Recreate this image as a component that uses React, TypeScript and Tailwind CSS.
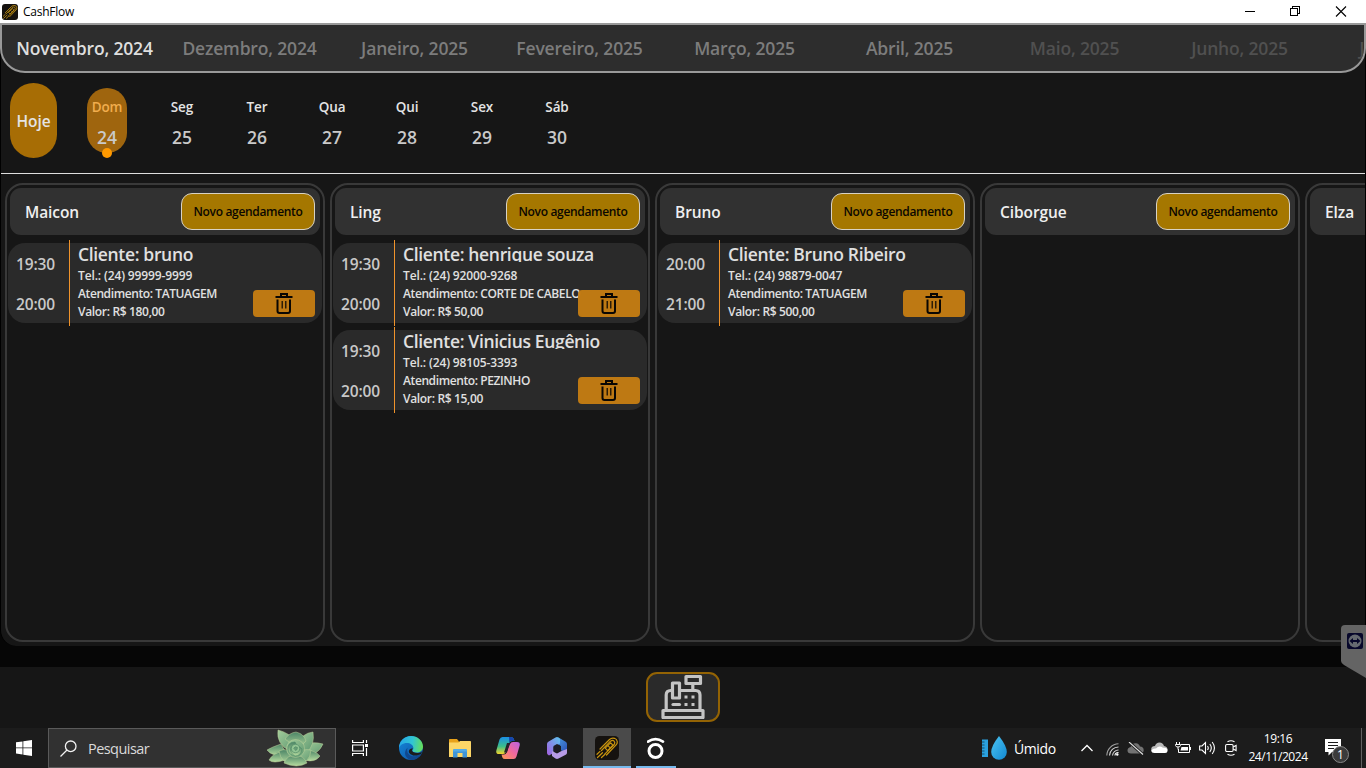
import React from "react";

const months = [
  { name: "Novembro, 2024", cls: "text-[#dedede]" },
  { name: "Dezembro, 2024", cls: "text-[#7c7c7c]" },
  { name: "Janeiro, 2025", cls: "text-[#7c7c7c]" },
  { name: "Fevereiro, 2025", cls: "text-[#7c7c7c]" },
  { name: "Março, 2025", cls: "text-[#7c7c7c]" },
  { name: "Abril, 2025", cls: "text-[#7c7c7c]" },
  { name: "Maio, 2025", cls: "text-[#505050]" },
  { name: "Junho, 2025", cls: "text-[#505050]" },
  { name: "Julho, 2025", cls: "text-[#505050]" },
];

const days = [
  { label: "Seg", n: 25 },
  { label: "Ter", n: 26 },
  { label: "Qua", n: 27 },
  { label: "Qui", n: 28 },
  { label: "Sex", n: 29 },
  { label: "Sáb", n: 30 },
];

type Appointment = {
  start: string;
  end: string;
  client: string;
  phone: string;
  service: string;
  price: string;
};

const columns: { name: string; items: Appointment[] }[] = [
  {
    name: "Maicon",
    items: [
      { start: "19:30", end: "20:00", client: "bruno", phone: "(24) 99999-9999", service: "TATUAGEM", price: "180,00" },
    ],
  },
  {
    name: "Ling",
    items: [
      { start: "19:30", end: "20:00", client: "henrique souza", phone: "(24) 92000-9268", service: "CORTE DE CABELO", price: "50,00" },
      { start: "19:30", end: "20:00", client: "Vinicius Eugênio", phone: "(24) 98105-3393", service: "PEZINHO", price: "15,00" },
    ],
  },
  {
    name: "Bruno",
    items: [
      { start: "20:00", end: "21:00", client: "Bruno Ribeiro", phone: "(24) 98879-0047", service: "TATUAGEM", price: "500,00" },
    ],
  },
  { name: "Ciborgue", items: [] },
  { name: "Elza", items: [] },
];

function AppLogo({ className }: { className: string }) {
  return (
    <svg viewBox="0 0 24 24" className={className} fill="none">
      <rect width="24" height="24" rx="4.5" fill="#15120f" />
      <g stroke="#c8940f" strokeWidth="1.2" strokeLinejoin="round" strokeLinecap="round">
        <path d="M5 13 14.500 3.500q2.200-2 5-1.200 2.500.8 2.800 3.400.1 1.800-1.200 3.200L11.500 19" />
        <path d="m6.500 14.500 9-9.300q2-1.500 3.600-.1 1.400 1.500.1 3.400L10 17.800" />
        <path d="m10.200 12.200 5.300-5.400 2.400 2.300-5.300 5.500zM13.500 10.200l.9.900" />
        <path d="M2 18.300 5 15.400M2.500 21.500l5-4.800M6.500 21.500l3.500-3.300" />
      </g>
    </svg>
  );
}

function Trash() {
  return (
    <svg viewBox="0 0 18 22" className="-mt-px h-[22px] w-[18px]" fill="none" stroke="#0a0703">
      <path d="M.5 5h17" strokeWidth="2" />
      <path d="M6 4.500V2h6v2.500" strokeWidth="2" />
      <path d="M2.500 7.500V19q0 2 2 2h8.500q2 0 2-2V7.500" strokeWidth="2" />
      <path d="M7.200 9v7.500M10.800 9v7.500" strokeWidth="1.200" />
    </svg>
  );
}

function Card({ a }: { a: Appointment }) {
  return (
    <div className="flex h-[80px] w-[314px] shrink-0 rounded-[17px] bg-[#2a2a2a] text-[#e0e0e0]">
      <div className="flex w-[61px] shrink-0 flex-col items-center pr-[6px] pt-[1px] text-[15.5px] font-semibold leading-[40px] tracking-[-0.1px] text-[#c8c8c8]">
        <span>{a.start}</span>
        <span>{a.end}</span>
      </div>
      <div className="-my-[3px] w-px shrink-0 bg-[#f0932b]" />
      <div className="flex min-w-0 flex-1 flex-col whitespace-nowrap pl-[8px] text-[12px] font-semibold">
        <div className="h-[19px] overflow-hidden text-[17.5px] leading-[23px] tracking-[-0.34px]">Cliente: {a.client}</div>
        <span className="mt-[5px] leading-[18px] tracking-[-0.12px]">Tel.: {a.phone}</span>
        <span className="leading-[17px] tracking-[-0.4px]">Atendimento: {a.service}</span>
        <span className="mt-px leading-[18px] tracking-[-0.33px]">Valor: R$ {a.price}</span>
      </div>
      <button className="-ml-[69px] mr-[7px] mt-[47px] flex h-[27px] w-[62px] shrink-0 items-center justify-center rounded-[4px] bg-[#c67d12]/95">
        <Trash />
      </button>
    </div>
  );
}

function CashRegister() {
  return (
    <svg viewBox="0 0 44 46" className="-mt-[2px] h-[46px] w-[44px] shrink-0" fill="none" stroke="#c4c4c4" strokeWidth="3.2" strokeLinejoin="round">
      <rect x="2" y="37.500" width="40" height="7" />
      <path d="M5.200 37V22q0-4.500 4.500-4.500H11M20 17.500h14.500q4.500 0 4.500 4.500V37" />
      <rect x="11.500" y="10" width="7" height="15" />
      <rect x="25" y="3.500" width="14.500" height="7" />
      <path d="M31.800 11v6" />
      <path d="M12 31.500h6.500" strokeLinecap="round" />
      <path d="M25 22.500v3M32 22.500v3M25 30v3M32 30v3" strokeWidth="3" />
    </svg>
  );
}

function Succulent() {
  return (
    <svg viewBox="0 0 58 38" className="h-[38px] w-[58px]">
      <defs>
        <linearGradient id="leaf" x1="0" y1="0" x2="0" y2="1">
          <stop offset="0" stopColor="#4b8466" />
          <stop offset="1" stopColor="#b6dc9f" />
        </linearGradient>
        <linearGradient id="leafB" x1="0" y1="0" x2="1" y2="1">
          <stop offset="0" stopColor="#a3cd9b" />
          <stop offset="1" stopColor="#5c966f" />
        </linearGradient>
      </defs>
      <g stroke="#bfd39a" strokeWidth=".5">
        <path d="M22 27Q6 28 1 21q5-3 14-6z" fill="url(#leaf)" />
        <path d="M36 28q16-1 21-13-11-3-18 1z" fill="url(#leafB)" />
        <path d="M19 31Q7 35 3 31q4-7 15-9z" fill="url(#leaf)" />
        <path d="M39 31q10 3 15-4-5-6-15-6z" fill="url(#leaf)" />
        <path d="M24 22Q10 15 12 1q12 3 18 12z" fill="url(#leafB)" />
        <path d="M31 16Q36 4 47 3q2 13-6 20z" fill="url(#leafB)" />
        <path d="M19 10q4-6 11-7 8 2 10 9l-8 8z" fill="url(#leaf)" />
        <path d="M28 35q-13 0-15-13 9-4 17 4z" fill="url(#leaf)" />
        <path d="M30 35q14 0 15-14-9-2-16 5z" fill="url(#leafB)" />
        <path d="M18 34q3-8 12-8 8 1 11 8-10 6-23 0z" fill="url(#leaf)" />
        <circle cx="29.500" cy="19.500" r="9" fill="url(#leafB)" />
      </g>
      <g stroke="#4f8a66" strokeWidth=".6">
        <path d="M22 21q-1-8 7-8 5 7 0 13-5 1-7-5z" fill="url(#leaf)" />
        <path d="M29 27q-6-3-4-9 7-3 11 2-1 7-7 7z" fill="url(#leaf)" />
        <circle cx="29.500" cy="19.500" r="4.200" fill="#93c593" />
        <path d="M27.500 19.500q1.500-3 4-1 0 3-2.500 3" fill="#679d75" />
      </g>
    </svg>
  );
}

function Edge() {
  return (
    <svg viewBox="0 0 24 24" className="h-6 w-6">
      <defs>
        <linearGradient id="edgeTop" x1="0" y1=".4" x2="1" y2=".5">
          <stop offset="0" stopColor="#26a7e8" />
          <stop offset=".55" stopColor="#31c5d3" />
          <stop offset="1" stopColor="#66df58" />
        </linearGradient>
        <linearGradient id="edgeLow" x1="0" y1="0" x2="1" y2="1">
          <stop offset="0" stopColor="#1689dc" />
          <stop offset="1" stopColor="#0c4fa0" />
        </linearGradient>
      </defs>
      <circle cx="12" cy="12" r="12" fill="url(#edgeLow)" />
      <path d="M0 12C0 5 5.400 0 12 0s12 5 12 10.500c0 4-3 6-6.500 6-3 0-4-1-4-2 0-.7.900-1 .9-2.500C14.400 9 11 7 8 7c-4.500 0-7 2.500-8 5z" fill="url(#edgeTop)" />
      <path d="M8.500 12c-2 8 7 11 14 5.500C20.500 21.500 16.500 24 12 24 5 22 4 14.500 10 10.500c-.8.500-1.200 1-1.500 1.500z" fill="#10488f" />
      <path d="M13.800 12.200c-.5 1.300-1.600 2.300.4 3.800 3 2 7 1 8.800-.5l-.8 2.200c-4 2.600-10 2.500-12-1-1-2 .5-4.200 3.600-4.500z" fill="#1c1c1c" />
    </svg>
  );
}

function Explorer() {
  return (
    <svg viewBox="0 0 22 19" className="h-[19px] w-[22px]">
      <path d="M0 .8Q0 0 .8 0H8l2 2.500V6H0z" fill="#e8a21a" />
      <path d="M0 3.500h9.500L11 2h10.200q.8 0 .8.800V18H0z" fill="#fcd667" />
      <path d="M4 18.500v-7q0-1.500 1.500-1.500h11q1.500 0 1.500 1.500v7h-4.500V14h-5v4.500z" fill="#3f95d8" />
      <path d="M4 11.500q0-1.500 1.500-1.500h11q1.500 0 1.500 1.500v1H4z" fill="#52abe8" />
    </svg>
  );
}

function Copilot() {
  return (
    <svg viewBox="0 0 24 22" className="h-[22px] w-6">
      <defs>
        <linearGradient id="cpA" x1="0" y1="0" x2="0" y2="1">
          <stop offset="0" stopColor="#1a8fe6" />
          <stop offset=".55" stopColor="#3bbd8b" />
          <stop offset="1" stopColor="#f3d52b" />
        </linearGradient>
        <linearGradient id="cpB" x1="1" y1="0" x2="0" y2="1">
          <stop offset="0" stopColor="#b862e6" />
          <stop offset=".5" stopColor="#f2699b" />
          <stop offset="1" stopColor="#fb9a50" />
        </linearGradient>
      </defs>
      <path d="M6.500 0H15q2 0 2.600 1.500L18.500 4H16q-2 0-2.700 2L10 15q-.8 2-3 2H3q-3.500 0-2.600-3.700L3.500 2.500Q4.300 0 6.500 0z" fill="url(#cpA)" />
      <path d="M17.500 22H9q-2 0-2.600-1.500L5.500 17.500H8q2 0 2.700-2L14 7q.8-2 3-2h4q3.500 0 2.600 3.700l-3.100 10.800Q19.700 22 17.500 22z" fill="url(#cpB)" />
      <path d="M11 6h2.500L11 15.500H8z" fill="#242229" />
      <path d="M13 0h2q2 0 2.600 1.500L18.500 4H16q-2 0-2.700 2z" fill="#1745ad" />
    </svg>
  );
}

function M365() {
  return (
    <svg viewBox="0 0 20 22" className="h-[22px] w-5">
      <defs>
        <linearGradient id="msA" x1="1" y1="0" x2="0" y2="1">
          <stop offset="0" stopColor="#5cc4ee" />
          <stop offset="1" stopColor="#a65de0" />
        </linearGradient>
        <linearGradient id="msB" x1="0" y1="0" x2="1" y2="1">
          <stop offset="0" stopColor="#4fa6e6" />
          <stop offset="1" stopColor="#2b4fb4" />
        </linearGradient>
      </defs>
      <path d="M11.500.5 18.700 4.700Q20 5.500 20 7v8l-6-1.500V9.200L8 5.500z" fill="url(#msB)" />
      <path d="M8.500.5q1.500-.8 3 0L13 2v4.500L6.500 10v6L2 18.500l-1-.7q-1-.6-1-2V7q0-1.500 1.300-2.200z" fill="url(#msA)" />
      <path d="M20 12v3.800q0 1.300-1.300 2L11.500 21.600q-1.500.8-3 0L5 19V14l5 2.500 4-2.200z" fill="#b79be6" />
      <path d="M6.500 9 10 7l4 2.200v4.600L10 16l-3.500-2z" fill="#1d1d24" />
    </svg>
  );
}

function Taskbar() {
  return (
    <div className="flex h-[40px] w-full shrink-0 items-center overflow-hidden bg-[#1c1c1c]">
      <div className="flex w-[48px] justify-center">
        <svg viewBox="0 0 16 16" className="h-4 w-4" fill="#fff">
          <path d="M0 2.300 6.500 1.400v6.100H0zM7.300 1.300 16 0v7.500H7.300zM0 8.300h6.500v6.200L0 13.600zM7.300 8.300H16V16l-8.700-1.300z" />
        </svg>
      </div>
      <div className="flex h-[40px] w-[288px] items-center border border-[#5a5a5a] bg-[#313131] pl-[11px] pr-[11px]">
        <svg viewBox="0 0 17 17" className="h-[17px] w-[17px]" fill="none" stroke="#f2f2f2" strokeWidth="1.300">
          <circle cx="10.700" cy="6.300" r="5.300" />
          <path d="M7 10 .5 16.500" />
        </svg>
        <span className="ml-[11px] flex-1 pt-px text-[14.5px] tracking-[-0.55px] text-[#dadada]">Pesquisar</span>
        <Succulent />
      </div>
      <div className="flex w-[48px] justify-center">
        <svg viewBox="0 0 16 16" className="h-4 w-4" fill="none" stroke="#fff" strokeWidth="1.200">
          <path d="M.6 0v2.500h10.800V0M.6 16v-2.500h10.800V16M.6 5h10.800v6H.6zM14.500 0v3M14.500 8v8" />
          <path d="M13 4h3v3h-3z" fill="#fff" stroke="none" />
        </svg>
      </div>
      <div className="flex w-[199px] items-center pl-[15px]">
        <Edge />
        <div className="ml-[26px]"><Explorer /></div>
        <div className="ml-[25px]"><Copilot /></div>
        <div className="ml-[27px]"><M365 /></div>
      </div>
      <div className="flex h-[40px] w-[48px] items-center justify-center border-b-2 border-[#76b9ed] bg-[#4a4a4a] pt-[1px]">
        <AppLogo className="h-6 w-6" />
      </div>
      <div className="ml-[5px] flex h-[40px] w-[40px] items-center justify-center border-b-2 border-[#76b9ed] pt-[1px]">
        <svg viewBox="0 0 18 22" className="h-[22px] w-[18px]" fill="none" stroke="#fff">
          <circle cx="8.500" cy="14" r="6.500" strokeWidth="3" />
          <path d="M1 4.600q7.500-5 15 0" strokeWidth="2.600" strokeLinecap="round" />
        </svg>
      </div>
      <div className="ml-auto flex h-full items-center text-white">
        <svg viewBox="0 0 25 24" className="h-6 w-[25px]">
          <defs>
            <linearGradient id="drop" x1="0" y1="0" x2="1" y2="1">
              <stop offset="0" stopColor="#4cc5f2" />
              <stop offset="1" stopColor="#1288d2" />
            </linearGradient>
          </defs>
          <path d="M0 3.500h6V21H0z" fill="#2aa1df" />
          <path d="M0 6h2.500M0 9h2.500M0 12h2.500M0 15h2.500M0 18h2.500" stroke="#17506e" />
          <path d="M17 0q7.800 10 7.800 16A7.800 7.800 0 0 1 9.200 16Q9.200 10 17 0z" fill="url(#drop)" />
        </svg>
        <span className="ml-[7px] w-[42px] text-[14px] tracking-[-0.4px]">Úmido</span>
        <svg viewBox="0 0 12 8" className="ml-[25px] h-2 w-3" fill="none" stroke="#fff" strokeWidth="1.300"><path d="m.5 7 5.500-5.500L11.500 7" /></svg>
        <svg viewBox="0 0 13 13" className="ml-[13px] mt-[2px] h-[13px] w-[13px]" fill="none" stroke="#d5d5d5" strokeWidth="1.100">
          <path d="M.8 12.500A12 12 0 0 1 12.500.8" stroke="#a0a0a0" />
          <path d="M3.500 12.500a9 9 0 0 1 9-8.500M6.500 12.500a6 6 0 0 1 6-5.500" />
          <path d="M9 12.500q0-3 3.500-3" stroke="#fff" /><circle cx="11.300" cy="11.500" r="1.200" fill="#fff" stroke="none" />
        </svg>
        <svg viewBox="0 0 18 13" className="ml-[8px] h-[13px] w-[18px]">
          <path d="M4 11.500q-3.500 0-3.500-3T3.700 5Q5 1 9 1.300q3 .2 4 3.200 3.500 0 3.700 3.500 0 3-3 3.500z" fill="#737373" />
          <path d="m2 0 14 12.500" stroke="#1c1c1c" strokeWidth="3" /><path d="m2 0 14 12.500" stroke="#e3e3e3" strokeWidth="1.100" />
        </svg>
        <svg viewBox="0 0 17 12" className="ml-[6px] h-3 w-[17px]">
          <path d="M3.500 10.500Q0 10 .2 7T4 4Q5 .5 8.500.5T13 4q3.500.5 3.500 3.500-.2 3-3 3z" fill="#b9b9b9" />
          <path d="M3.500 11Q.5 11 .3 8.500 2 6 5 6.500q3-3.500 7-.7 4.500-.5 4.500 2.700Q16.500 11 14 11z" fill="#fff" />
        </svg>
        <svg viewBox="0 0 16 12" className="ml-[7px] h-3 w-4" fill="none" stroke="#fff">
          <path d="M6 2.500h8.500v8h-11V7" /><path d="M6.500 5H13v3.500H5.500z" fill="#fff" stroke="none" /><path d="M15.500 5v3" />
          <path d="M1.500 0v2M4.500 0v2M.5 2.500h5v1q-.3 1.500-2.500 1.500T.5 3.500zM3 5v2.500" />
        </svg>
        <svg viewBox="0 0 17 14" className="ml-[8px] h-[14px] w-[17px]" fill="none" stroke="#fff" strokeWidth="1.100">
          <path d="M.6 5H3l3.500-3.500v11L3 9H.6zM8.500 5q1.500 2 0 4M10.800 3q3 4 0 8M13.200 1q4.500 6 0 12" />
        </svg>
        <svg viewBox="0 0 12 16" className="ml-[9px] h-4 w-3" fill="none" stroke="#fff" strokeWidth="1.100">
          <path d="M2.500 1.800q3.500-2 7 0M2.500 14.200q3.500 2 7 0" /><rect x=".6" y="4.500" width="7.500" height="7" rx="1.200" /><path d="m8.100 7 3-1.500v5L8.100 9" />
        </svg>
        <div className="ml-[8px] flex w-[66px] flex-col items-center text-[12px] leading-[18px] tracking-[-0.45px]">
          <span>19:16</span>
          <span>24/11/2024</span>
        </div>
        <svg viewBox="0 0 26 26" className="ml-[13px] mt-[5px] h-[26px] w-[26px]">
          <path d="M1 1h16v13H8l-3.500 3.500V14H1z" fill="#fff" />
          <path d="M4 4.500h10M4 7.500h10M4 10.500h6" stroke="#1c1c1c" strokeWidth="1.100" />
          <circle cx="16.500" cy="16.500" r="8" fill="#3b3b3b" stroke="#888" />
          <text x="16.500" y="20.700" textAnchor="middle" fill="#fff" fontSize="12" fontFamily="Open Sans, sans-serif">1</text>
        </svg>
        <div className="ml-[11px] mr-[4px] h-full w-px bg-[#606060]" />
      </div>
    </div>
  );
}

export default function App() {
  return (
    <div className="relative flex h-[768px] w-[1366px] flex-col overflow-hidden bg-[#060606] font-['Open_Sans','Noto_Sans',sans-serif]">
      <header className="flex h-[23px] shrink-0 items-center bg-white text-black">
        <AppLogo className="ml-[2px] h-4 w-4" />
        <span className="ml-[5px] text-[12px] tracking-[-0.25px]">CashFlow</span>
        <svg viewBox="0 0 102 12" className="ml-auto mr-[19px] mt-[-2px] h-3 w-[102px]" fill="none" stroke="#000" shapeRendering="crispEdges">
          <path d="M0 6.500h10" />
          <path d="M45.500 3.500h7v7h-7zM47.500 3.500v-2h7v7h-2" />
          <path d="m91 1.500 10 10M101 1.500l-10 10" strokeWidth="1.100" shapeRendering="auto" />
        </svg>
      </header>

      <nav className="z-10 -mb-[50px] flex h-[50px] shrink-0 overflow-hidden rounded-b-[25px] border-2 border-[#999] bg-[#2d2d2d]">
        {months.map((m) => (
          <div key={m.name} className={"flex w-[165px] shrink-0 justify-center whitespace-nowrap text-[17.5px] font-semibold leading-[47px] tracking-[-0.17px] " + m.cls}>
            {m.name}
          </div>
        ))}
      </nav>

      <main className="flex h-[623px] shrink-0 flex-col overflow-hidden rounded-bl-[16px] border-l border-r border-black bg-[#161616] pt-[50px]">
        <section className="flex h-[100px] shrink-0 items-start pl-[9px] pt-[10px] font-semibold text-[#e4e4e4]">
          <button className="flex h-[75px] w-[47px] items-center justify-center rounded-[24px] bg-[#a76d05] pt-[2px] text-[15.5px] tracking-[-0.1px]">Hoje</button>
          <div className="flex flex-col items-center pl-[30px]">
            <div className="mt-[5px] flex h-[65px] w-[40px] flex-col items-center rounded-[20px] bg-[#9f650e] pt-[9px]">
              <span className="text-[13.5px] leading-[20px] tracking-[-0.1px] text-[#f1ad4d]">Dom</span>
              <span className="mt-[9px] text-[17.5px] leading-[22px] text-[#c9c9c9]">24</span>
            </div>
            <span className="-mt-[5px] h-[10px] w-[10px] rounded-full bg-[#ff9900]" />
          </div>
          <div className="flex pl-[17.5px] pt-[14px]">
            {days.map((d) => (
              <div key={d.n} className="flex w-[75px] flex-col items-center">
                <span className="text-[13.5px] leading-[20px] tracking-[-0.1px]">{d.label}</span>
                <span className="mt-[9px] text-[17.5px] leading-[22px] text-[#c9c9c9]">{d.n}</span>
              </div>
            ))}
          </div>
        </section>
        <div className="h-px shrink-0 bg-[#dedede]" />

        <section className="flex shrink-0 gap-[5px] pl-[4px] pt-[9px]">
          {columns.map((c) => (
            <div key={c.name} className="flex h-[459px] w-[320px] shrink-0 flex-col rounded-[18px] border-2 border-[#393939] px-px pt-[3px]">
              <div className="mx-[2px] flex h-[47px] shrink-0 items-center justify-between rounded-[11px] bg-[#313131] pl-[15px] pr-[5px]">
                <span className="pt-[2px] text-[15.5px] font-semibold tracking-[-0.08px] text-[#efefef]">{c.name}</span>
                <button className="h-[37px] w-[134px] rounded-[11px] border border-[#d8d2c4] bg-[#a57700] text-[12px] font-semibold tracking-[-0.33px] text-[#0b0700]">
                  Novo agendamento
                </button>
              </div>
              <div className="mt-[8px] flex flex-col gap-[7px]">
                {c.items.map((a) => (
                  <Card key={a.client} a={a} />
                ))}
              </div>
            </div>
          ))}
        </section>
      </main>

      <footer className="mt-[21px] flex h-[61px] shrink-0 justify-center bg-[#161616] pt-[5px]">
        <button className="flex h-[50px] w-[74px] items-center justify-center rounded-[11px] border-2 border-[#936304] bg-[#2a2a2a]">
          <CashRegister />
        </button>
      </footer>
      <Taskbar />

      <svg viewBox="0 0 25 54" className="absolute right-0 top-[625px] h-[54px] w-[25px]">
        <path d="M0 4Q0 0 4 0h21v53L3 40q-3-2-3-4z" fill="#646464" />
        <rect x="6" y="8" width="16" height="16" rx="2" fill="#07072a" />
        <circle cx="14" cy="16" r="6.500" fill="#666a70" />
        <path d="m8.500 16 3.500-3v2h4v-2l3.500 3-3.500 3v-2h-4v2z" fill="#07072a" />
      </svg>
    </div>
  );
}
